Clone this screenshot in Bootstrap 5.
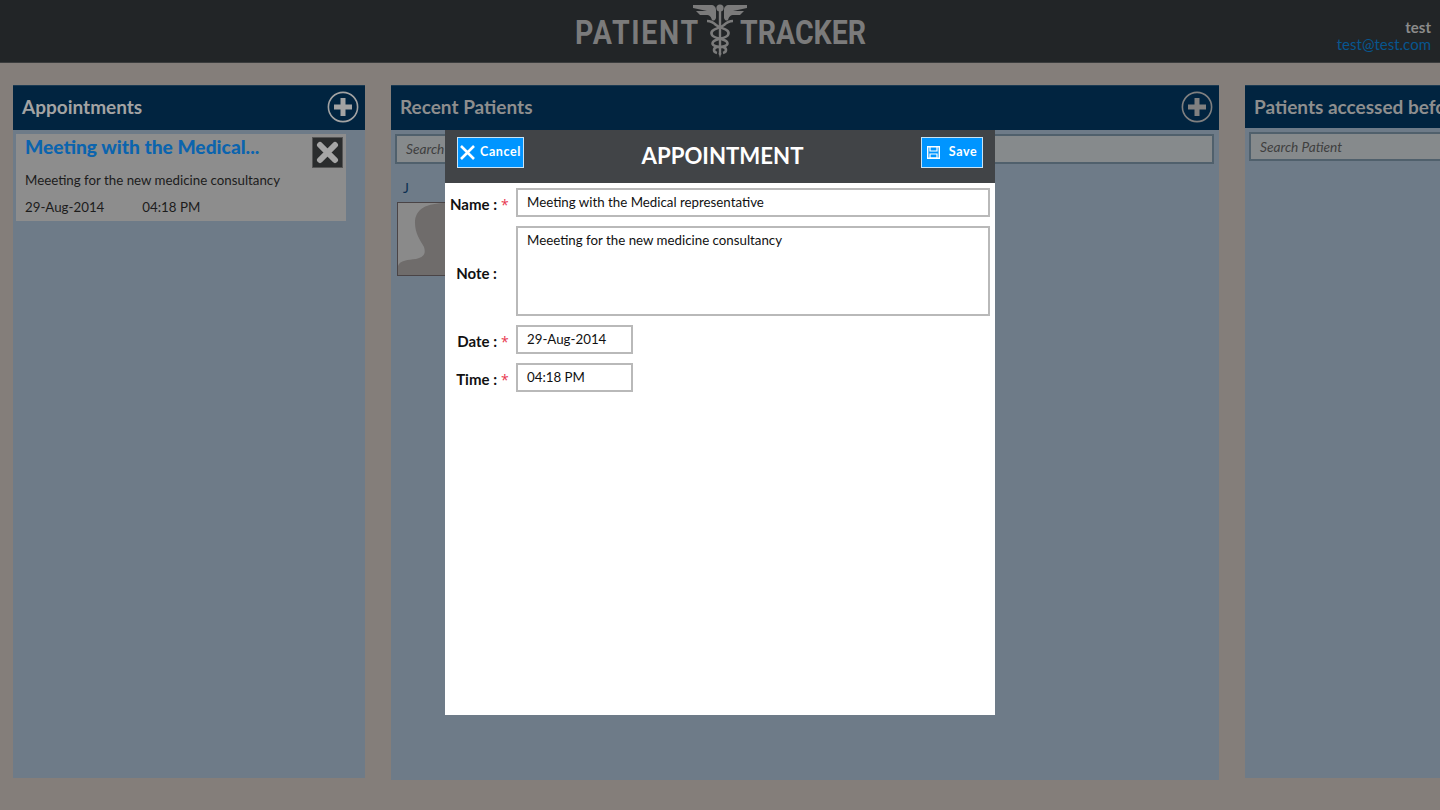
<!DOCTYPE html>
<html lang="en">
<head>
<meta charset="utf-8"/>
<meta content="width=device-width, initial-scale=1.0" name="viewport"/>
<title>Patient Tracker</title>
<link href="https://cdn.jsdelivr.net/npm/bootstrap@5.3.0/dist/css/bootstrap.min.css" rel="stylesheet"/>
<style>
  html, body { height: 100%; overflow: hidden; }
  body { background: #847e7a; font-family: Lato, "Open Sans", sans-serif; color: #111; font-size: 14px; }
  .top-bar { height: 63px; background: #222527; border-bottom: 1px solid #3a3c3d; position: relative; }
  .logo-row { width: 290px; }
  .logo-word { font-family: Roboto, sans-serif; font-weight: 700; font-size: 34px; color: #7b7b7b; line-height: 1; display: block; padding-top: 2px; transform: scaleX(.84); transform-origin: left center; white-space: nowrap; }
  .word-left { width: 122px; letter-spacing: 2px; }
  .word-right { width: 125px; }
  .logo-mark { flex: none; margin: 0 -7px 0 -4px; }
  .user-box { position: absolute; right: 9px; top: 19px; text-align: right; line-height: 17px; }
  .user-name { color: #8b8b8b; font-weight: 700; font-size: 15px; }
  .user-mail { color: #07568f; font-size: 15px; }
  .board { padding: 22px 0 0 13px; gap: 26px; width: 1800px; }
  .panel-col { background: #6e7b88; height: 693px; flex: none; }
  .col-appts { width: 352px; }
  .col-recent { width: 828px; height: 695px; }
  .col-before { width: 400px; }
  .panel-head { height: 45px; background: #012440; padding: 0 6px 2px 9px; border-top: 1px solid #1b3a52; }
  .col-before .panel-head { height: 43px; padding-bottom: 0; }
  .panel-title { font-size: 19px; font-weight: 700; color: #8e8e8e; white-space: nowrap; margin: 0; }
  .col-appts .panel-title { color: #a3a3a3; }
  .appt-card { width: 330px; height: 87px; margin: 4px 0 0 3px; background: #8d8d8d; padding: 1px 0 0 9px; position: relative; }
  .appt-title { color: #0b64ae; font-size: 19.2px; font-weight: 900; line-height: 24px; margin: 0; }
  .appt-note { margin: 12px 0 0; line-height: 19px; font-size: 13.3px; color: #1c1c1c; }
  .appt-when { margin-top: 8px; line-height: 19px; font-size: 13.3px; color: #1c1c1c; gap: 38px; }
  .appt-del { position: absolute; right: 3px; top: 3px; width: 31px; height: 31px; background: #2a2c2d; border: 1px solid #555; }
  .search-box { height: 29px; margin: 4px 5px 0 4px; border: 2px solid #50606c; background: #868a8c; font-style: italic; color: #3f3f3f; font-size: 13.7px; padding: 0 9px; line-height: 25px; }
  .col-recent .search-box { height: 30px; }
  .group-letter { color: #0c2f52; font-size: 14px; margin: 16px 0 0 12px; line-height: 16px; }
  .avatar-box { width: 100px; height: 74px; margin: 6px 0 0 6px; background: #8a8a8a; border: 1px solid #4a4446; }
  .appt-dialog { position: absolute; left: 445px; top: 130px; width: 550px; height: 585px; background: #fff; }
  .dialog-head { height: 53px; background: #414447; padding: 0 12px; position: relative; }
  .dialog-title { color: #fff; font-size: 22.2px; font-weight: 700; margin: 0; position: absolute; left: 90px; right: 90px; top: 9px; text-align: center; padding-left: 5px; line-height: 33px; }
  .act-btn { height: 31px; background: #0095ff; border: 1px solid #c7e4f7; border-radius: 0; color: #fff; font-size: 12.5px; font-weight: 700; letter-spacing: .6px; padding: 0; gap: 5px; position: relative; z-index: 1; top: -4px; }
  .btn-cancel { width: 67px; }
  .btn-save { width: 62px; gap: 9px; }
  .btn-cancel:hover, .btn-save:hover { background: #0095ff; color: #fff; }
  .form-row-x { margin-bottom: 9px; padding-right: 5px; }
  .form-stack { padding-top: 5px; }
  .lbl { width: 71px; flex: none; font-weight: 700; font-size: 15px; color: #111; padding-top: 6px; white-space: nowrap; line-height: 20px; }
  .lbl-note { padding-top: 4px; }
  .lbl-inner { display: inline-block; width: 52px; text-align: right; }
  .req { color: #e8384f; margin-left: 4px; font-weight: 400; font-family: "Open Sans", sans-serif; font-size: 14px; }
  .fld { border: 2px solid #b9b9b9; height: 29px; width: 100%; padding: 0 9px; font-size: 13.3px; color: #111; line-height: 25px; background: #fff; }
  .fld-area { height: 90px; }
  .fld-short { width: 117px; }
</style>
</head>
<body>
<header class="top-bar d-flex justify-content-center align-items-center">
  <div class="logo-row d-flex align-items-center">
    <span class="logo-word word-left">PATIENT</span>
    <svg class="logo-mark" width="54" height="56" viewBox="0 0 54 56" fill="#7b7b7b">
      <path d="M0 2h18c3 0 5 2 5 5v8c-1 3-3 3-4 2-1-3-2-5-6-5H7L3 8h11L0 5z"/>
      <path d="M54 2H36c-3 0-5 2-5 5v8c1 3 3 3 4 2 1-3 2-5 6-5h6l4-4H40l14-3z"/>
      <circle cx="27" cy="5" r="3.6"/>
      <rect x="25.8" y="6" width="2.4" height="46"/>
      <path d="M25.6 50h2.8L27 55z"/>
      <g fill="none" stroke="#7b7b7b" stroke-width="2.6">
        <path d="M14 18c4 0 6 1 9 4 5 4 15 4 12 10-2 4-12 3-15 7-2 3 2 5 10 5 4 1 4 5 0 6"/>
        <path d="M40 18c-4 0-6 1-9 4-5 4-15 4-12 10 2 4 12 3 15 7 2 3-2 5-10 5-4 1-4 5 0 6"/>
      </g>
    </svg>
    <span class="logo-word word-right">TRACKER</span>
  </div>
  <div class="user-box">
    <div class="user-name">test</div>
    <div class="user-mail">test@test.com</div>
  </div>
</header>

<main class="board d-flex">
  <section class="panel-col col-appts">
    <div class="panel-head d-flex justify-content-between align-items-center">
      <h2 class="panel-title">Appointments</h2>
      <svg width="32" height="32" viewBox="0 0 32 32"><circle cx="16" cy="16" r="14.6" fill="none" stroke="#a3a3a3" stroke-width="1.6"/><path d="M16 7v18M7 16h18" stroke="#a3a3a3" stroke-width="5"/></svg>
    </div>
    <div class="appt-card">
      <h3 class="appt-title">Meeting with the Medical...</h3>
      <p class="appt-note">Meeeting for the new medicine consultancy</p>
      <div class="appt-when d-flex"><span>29-Aug-2014</span><span>04:18 PM</span></div>
      <div class="appt-del d-flex align-items-center justify-content-center">
        <svg width="23" height="23" viewBox="0 0 23 23"><path d="M4 4l15 15M19 4L4 19" stroke="#a6a6a6" stroke-width="6" stroke-linecap="round"/></svg>
      </div>
    </div>
  </section>

  <section class="panel-col col-recent">
    <div class="panel-head d-flex justify-content-between align-items-center">
      <h2 class="panel-title">Recent Patients</h2>
      <svg width="32" height="32" viewBox="0 0 32 32"><circle cx="16" cy="16" r="14.6" fill="none" stroke="#808080" stroke-width="1.6"/><path d="M16 7v18M7 16h18" stroke="#808080" stroke-width="5"/></svg>
    </div>
    <div class="search-box">Search Patient</div>
    <div class="group-letter">J</div>
    <div class="avatar-box">
      <svg width="98" height="72" viewBox="0 0 98 72" class="d-block"><path d="M0 72V63c2-6 10-6 18-7 8-2 10-5 8-12-4-7-9-14-9-24C17 6 28 0 49 0s32 6 32 20c0 10-5 17-9 24-2 7 0 10 8 12 8 1 16 1 18 7v9z" fill="#6f6c6b"/></svg>
    </div>
  </section>

  <section class="panel-col col-before">
    <div class="panel-head d-flex align-items-center">
      <h2 class="panel-title">Patients accessed before</h2>
    </div>
    <div class="search-box">Search Patient</div>
  </section>
</main>

<div class="appt-dialog">
  <div class="dialog-head d-flex justify-content-between align-items-center">
    <button class="btn act-btn btn-cancel d-flex align-items-center justify-content-center" type="button">
      <svg width="15" height="15" viewBox="0 0 15 15"><path d="M1 1l13 13M14 1L1 14" stroke="#fff" stroke-width="2.6"/></svg>Cancel
    </button>
    <h1 class="dialog-title">APPOINTMENT</h1>
    <button class="btn act-btn btn-save d-flex align-items-center justify-content-center" type="button">
      <svg width="13" height="13" viewBox="0 0 13 13"><path d="M.7.7h11.6v11.6H.7z" fill="none" stroke="#fff" stroke-width="1.4"/><path d="M3 1v4h7V1M3 8h7v4H3z" fill="none" stroke="#fff" stroke-width="1.2"/></svg>Save
    </button>
  </div>
  <div class="form-stack">
    <div class="form-row-x d-flex">
      <div class="lbl"><span class="lbl-inner">Name :</span><span class="req">*</span></div>
      <div class="fld">Meeting with the Medical representative</div>
    </div>
    <div class="form-row-x d-flex align-items-center">
      <div class="lbl lbl-note"><span class="lbl-inner">Note :</span></div>
      <div class="fld fld-area">Meeeting for the new medicine consultancy</div>
    </div>
    <div class="form-row-x d-flex">
      <div class="lbl"><span class="lbl-inner">Date :</span><span class="req">*</span></div>
      <div class="fld fld-short">29-Aug-2014</div>
    </div>
    <div class="form-row-x d-flex">
      <div class="lbl"><span class="lbl-inner">Time :</span><span class="req">*</span></div>
      <div class="fld fld-short">04:18 PM</div>
    </div>
  </div>
</div>

<script src="https://cdn.jsdelivr.net/npm/bootstrap@5.3.0/dist/js/bootstrap.bundle.min.js"></script>
</body>
</html>
